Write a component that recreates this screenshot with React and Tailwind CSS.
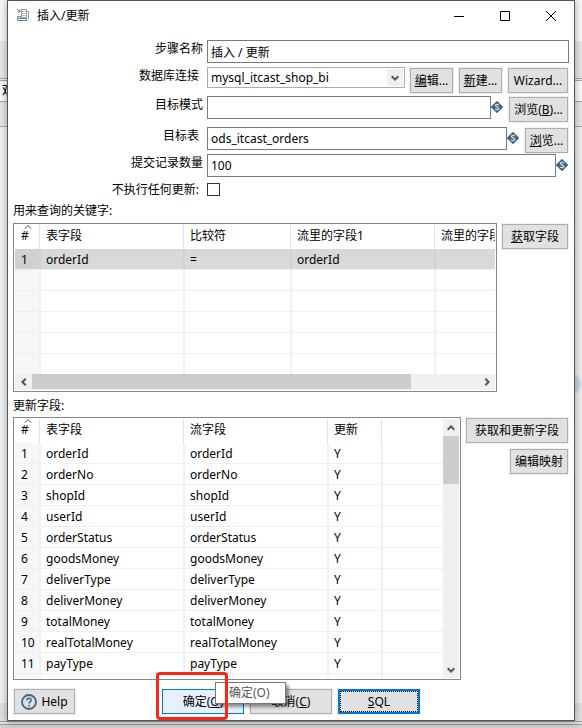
const button =
  "flex h-[25px] shrink-0 items-center justify-center whitespace-nowrap border border-[#adadad] bg-[#e1e1e1] leading-4 shadow-[0_0_0_1px_#f0f0f0]";
const field = "h-[23px] min-w-0 flex-1 border border-[#7a7a7a] bg-white px-[3px] leading-4 outline-none";

const keyHeaders = ["表字段", "比较符", "流里的字段1", "流里的字段2"];
const keyRows = [["1", "orderId", "=", "orderId", ""], ...Array.from({ length: 5 }, () => ["", "", "", "", ""])];

const updateHeaders = ["表字段", "流字段", "更新", ""];
const updateNames = [
  "orderId", "orderNo", "shopId", "userId", "orderStatus", "goodsMoney",
  "deliverType", "deliverMoney", "totalMoney", "realTotalMoney", "payType",
];
const updateRows = [...updateNames.map((n, i) => [String(i + 1), n, n, "Y", ""]), ["", "", "", "", ""]];

function Chevron({ turn = "" }) {
  return (
    <svg className={`h-2 w-2 ${turn}`} viewBox="0 0 8 8" fill="none" stroke="#555" strokeWidth="2" aria-hidden="true">
      <path d="M0.7 2.3 4 5.6 7.3 2.3" />
    </svg>
  );
}

function VariableIcon() {
  return (
    <svg className="mt-[5px] h-3 w-3 shrink-0" viewBox="0 0 12 12" aria-hidden="true">
      <path d="M6 0.600 11.400 6 6 11.400 0.600 6Z" fill="#3d6684" stroke="#3d6684" strokeWidth="1.200" strokeLinejoin="round" />
      <path d="M7.700 4.100C7 3.100 4.500 3.100 4.500 4.600 4.500 6.100 7.700 5.700 7.700 7.400 7.700 8.900 5 8.900 4.200 7.900" fill="none" stroke="#d5dfe6" strokeWidth="1.300" />
    </svg>
  );
}

function StepIcon() {
  return (
    <svg className="h-4 w-4" viewBox="0 0 16 16" fill="none" aria-hidden="true">
      <path d="M5.500 1.500h5v8h-5zM10.500 3.500h2v8" stroke="#8da2b0" />
      <path d="M6 3.500h4M6 5.500h4M6 7.500h4" stroke="#d2bda0" />
      <path d="M1.500 8.500h3v2h6v2h-9zM2 10.500h3" stroke="#6d8799" />
      <path d="M1 1l3 3M4 1.500V4H1.500" stroke="#6d8799" />
    </svg>
  );
}

function Grid({ label, headers, rows, widths, tableClass, selected }) {
  return (
    <table aria-label={label} className={`table-fixed border-separate border-spacing-0 text-left ${tableClass}`}>
      <colgroup>
        {widths.map((w, i) => (
          <col key={i} className={w} />
        ))}
      </colgroup>
      <thead>
        <tr>
          <th className="h-6 p-0 pr-px font-normal">
            <div className="relative h-6 border-r border-[#e0e0e0] pl-[6px] leading-[22px]">
              <svg className="absolute left-[9px] top-0 h-1 w-2" viewBox="0 0 8 4" fill="none" stroke="#555" aria-hidden="true">
                <path d="M0.500 3.800 4 0.600 7.500 3.800" />
              </svg>
              #
            </div>
          </th>
          {headers.map((h, i) => (
            <th key={i} className="h-6 p-0 pr-px font-normal">
              <div className={`h-6 whitespace-nowrap pl-[5px] leading-[22px] ${i < 3 ? "border-r border-[#e0e0e0]" : ""}`}>{h}</div>
            </th>
          ))}
        </tr>
      </thead>
      <tbody>
        {rows.map((row, r) => (
          <tr key={r} className={r === selected ? "bg-[#d9d9d9]" : ""}>
            {row.map((cell, c) => (
              <td
                key={c}
                className={`h-[21px] whitespace-nowrap border-b border-b-[#f0f0f0] p-0 pt-[2px] leading-[18px] ${
                  c === 0 ? (r === selected ? "bg-[#d0d0d0] pl-[6px]" : "bg-[#f7f7f7] pl-[6px]") : "pl-[5px]"
                } ${c < 4 ? (r === selected ? "border-r-2 border-r-[#cdd3dc]" : "border-r-2 border-r-[#ecf1fa]") : ""}`}
              >
                {cell}
              </td>
            ))}
          </tr>
        ))}
      </tbody>
    </table>
  );
}

function Label({ children, htmlFor, wide }) {
  return (
    <label htmlFor={htmlFor} className={`w-[199px] shrink-0 text-right leading-[18px] ${wide ? "pr-1" : "pr-2"}`}>
      {children}
    </label>
  );
}

export default function App() {
  return (
    <div className="relative min-h-screen overflow-hidden bg-[#f0f0f0] px-[7px] pb-[7px] font-['Noto_Sans','Noto_Sans_CJK_SC',sans-serif] text-[12px] text-black">
      <div className="absolute inset-0 flex flex-col">
        <div className="h-[41px] bg-[#f6f6f6]" />
        <div className="h-[37px] bg-[#e4e4e4]" />
        <div className="h-[3px] border-y border-[#a5a5a5] bg-[#eee]" />
        <div className="h-[20px] overflow-hidden bg-[#f8f8f8] pl-[2px] leading-5">观</div>
        <div className="h-[26px] border-y border-[#a5a5a5] bg-[#e4e4e4]" />
        <div className="flex flex-1 justify-end">
          <div className="flex w-[7px] items-start justify-end bg-[#ececec] pt-[246px]">
            <div className="mr-px h-[22px] w-[22px] shrink-0 rounded-full bg-[#c9d8e4]" />
          </div>
        </div>
        <div className="h-[18px] bg-[#dedede]" />
        <div className="h-[4px] border-y border-[#999] bg-[#e4e4e4]" />
        <div className="h-[3px] bg-[#d0d0d0]" />
      </div>

      <main className="relative border border-[#555] bg-white shadow-[0_1px_7px_rgba(0,0,0,0.35)]">
        <header className="flex h-[29px] items-center pl-2">
          <StepIcon />
          <h1 className="ml-[5px] flex-1">插入/更新</h1>
          <button aria-label="最小化" className="flex h-full w-[46px] items-center justify-center">
            <svg className="h-[10px] w-[10px]" viewBox="0 0 10 10" stroke="#000"><path d="M0 5.500h10" /></svg>
          </button>
          <button aria-label="最大化" className="flex h-full w-[46px] items-center justify-center">
            <svg className="h-[10px] w-[10px]" viewBox="0 0 10 10" fill="none" stroke="#000"><path d="M0.500 0.500h9v9h-9z" /></svg>
          </button>
          <button aria-label="关闭" className="flex h-full w-[46px] items-center justify-center">
            <svg className="h-[10px] w-[10px]" viewBox="0 0 10 10" stroke="#000"><path d="M0 0 10 10M10 0 0 10" /></svg>
          </button>
        </header>

        <div className="px-[5px] pb-[6px] pt-[10px]">
          <form className="-ml-[5px]">
            <div className="mb-1 flex">
              <Label htmlFor="step" wide>步骤名称</Label>
              <input id="step" className={field} defaultValue="插入 / 更新" />
            </div>
            <div className="mb-[2px] flex h-[27px]">
              <Label htmlFor="conn">数据库连接</Label>
              <div className="relative h-[21px] flex-1">
                <select id="conn" className="h-full w-full appearance-none border border-[#adadad] bg-white pl-[3px] leading-4 outline-none">
                  <option>mysql_itcast_shop_bi</option>
                </select>
                <span className="pointer-events-none absolute right-[2px] top-[2px] flex h-[17px] w-4 items-center justify-center bg-[#f0f0f0]">
                  <Chevron />
                </span>
              </div>
              <div className="ml-[5px] mr-px mt-px flex gap-[6px]">
                <button type="button" className={`${button} w-[43px]`}><u>编</u>辑...</button>
                <button type="button" className={`${button} w-[43px]`}><u>新</u>建...</button>
                <button type="button" className={`${button} w-[60px]`}>Wizard...</button>
              </div>
            </div>
            <div className="mb-1 flex h-[27px]">
              <Label htmlFor="schema" wide>目标模式</Label>
              <input id="schema" className={field} />
              <VariableIcon />
              <button type="button" className={`${button} ml-[6px] mr-px mt-px w-[59px]`}>浏览(<u>B</u>)...</button>
            </div>
            <div className="flex h-[27px]">
              <Label htmlFor="table">目标表</Label>
              <input id="table" className={field} defaultValue="ods_itcast_orders" />
              <VariableIcon />
              <button type="button" className={`${button} ml-[6px] mr-px mt-px w-[43px]`}><u>浏</u>览...</button>
            </div>
            <div className="mb-1 flex pr-px">
              <Label htmlFor="commit" wide>提交记录数量</Label>
              <input id="commit" className={field} defaultValue="100" />
              <VariableIcon />
            </div>
            <div className="flex h-5 items-start">
              <Label htmlFor="noupdate">不执行任何更新:</Label>
              <input id="noupdate" type="checkbox" className="mt-[2px] h-[13px] w-[13px] appearance-none border border-[#333] bg-white" />
            </div>
          </form>

          <h2 className="mb-[2px] h-5 leading-5">用来查询的关键字:</h2>
          <div className="flex items-start">
            <div className="min-w-0 flex-1 border border-[#828790] p-px">
              <div className="h-[149px] overflow-hidden">
                <Grid
                  label="用来查询的关键字"
                  headers={keyHeaders}
                  rows={keyRows}
                  widths={["w-[26px]", "w-[144px]", "w-[107px]", "w-[144px]", "w-[144px]"]}
                  tableClass="w-[565px]"
                  selected={0}
                />
              </div>
              <div className="flex h-4 items-center bg-[#f0f0f0]">
                <span className="flex w-[17px] justify-center"><Chevron turn="rotate-90" /></span>
                <span className="h-full flex-1"><span className="block h-[15px] w-[85%] bg-[#cdcdcd]" /></span>
                <span className="flex w-[17px] justify-center"><Chevron turn="-rotate-90" /></span>
              </div>
            </div>
            <button className={`${button} ml-[5px] mr-px mt-px w-[66px]`}><u>获</u>取字段</button>
          </div>

          <h2 className="mb-px mt-1 h-5 leading-5">更新字段:</h2>
          <div className="flex items-start">
            <div className="flex h-[263px] min-w-0 flex-1 border border-[#828790] p-px">
              <div className="min-w-0 flex-1 overflow-hidden">
                <Grid
                  label="更新字段"
                  headers={updateHeaders}
                  rows={updateRows}
                  widths={["w-[26px]", "w-[144px]", "w-[144px]", "w-[54px]", ""]}
                  tableClass="w-full"
                />
              </div>
              <div className="flex w-4 flex-col items-center bg-[#f0f0f0]">
                <span className="flex h-[17px] items-center"><Chevron turn="rotate-180" /></span>
                <span className="h-12 w-full bg-[#cdcdcd]" />
                <span className="mt-auto flex h-[17px] items-center"><Chevron /></span>
              </div>
            </div>
            <div className="ml-[5px] mr-px mt-px flex flex-col items-end gap-[6px]">
              <button className={`${button} w-[102px]`}>获取和更新字段</button>
              <button className={`${button} w-[58px]`}>编辑映射</button>
            </div>
          </div>

          <footer className="mt-[9px] grid grid-cols-[1fr_auto_1fr] px-px">
            <button className={`${button} w-[61px] gap-1`}>
              <svg className="h-4 w-4" viewBox="0 0 16 16" fill="none" stroke="#3d6684" aria-hidden="true">
                <circle cx="8" cy="8" r="7" strokeWidth="1.800" />
                <path d="M5.800 6.300C5.800 3.500 10.200 3.600 10.200 6.200 10.200 7.900 8 7.700 8 9.500M8 10.800v1.600" strokeWidth="1.500" />
              </svg>
              Help
            </button>
            <div className="relative flex gap-[6px]">
              <button className="flex h-[25px] w-[82px] items-center justify-center border border-[#0078d7] bg-[#e5f1fb]">确定(<u>O</u>)</button>
              <button className={`${button} w-[82px]`}>取消(<u>C</u>)</button>
              <button className="h-[25px] w-[82px] border-2 border-[#0078d7] bg-[#e1e1e1] shadow-[0_0_0_1px_#f0f0f0]">
                <span className="flex h-full items-center justify-center border border-dotted border-black"><u>S</u>QL</span>
              </button>
              <div role="tooltip" className="absolute -top-[7px] left-[53px] h-[22px] w-[71px] border border-[#767676] bg-white pl-[13px] leading-5 text-[#575757] shadow-[3px_3px_3px_rgba(0,0,0,0.4)]">
                确定(O)
              </div>
              <div className="absolute -left-[6px] -top-[17px] h-[48px] w-[72px] rounded-[4px] border-[3px] border-[#ff2418]" />
            </div>
          </footer>
        </div>
      </main>
    </div>
  );
}
